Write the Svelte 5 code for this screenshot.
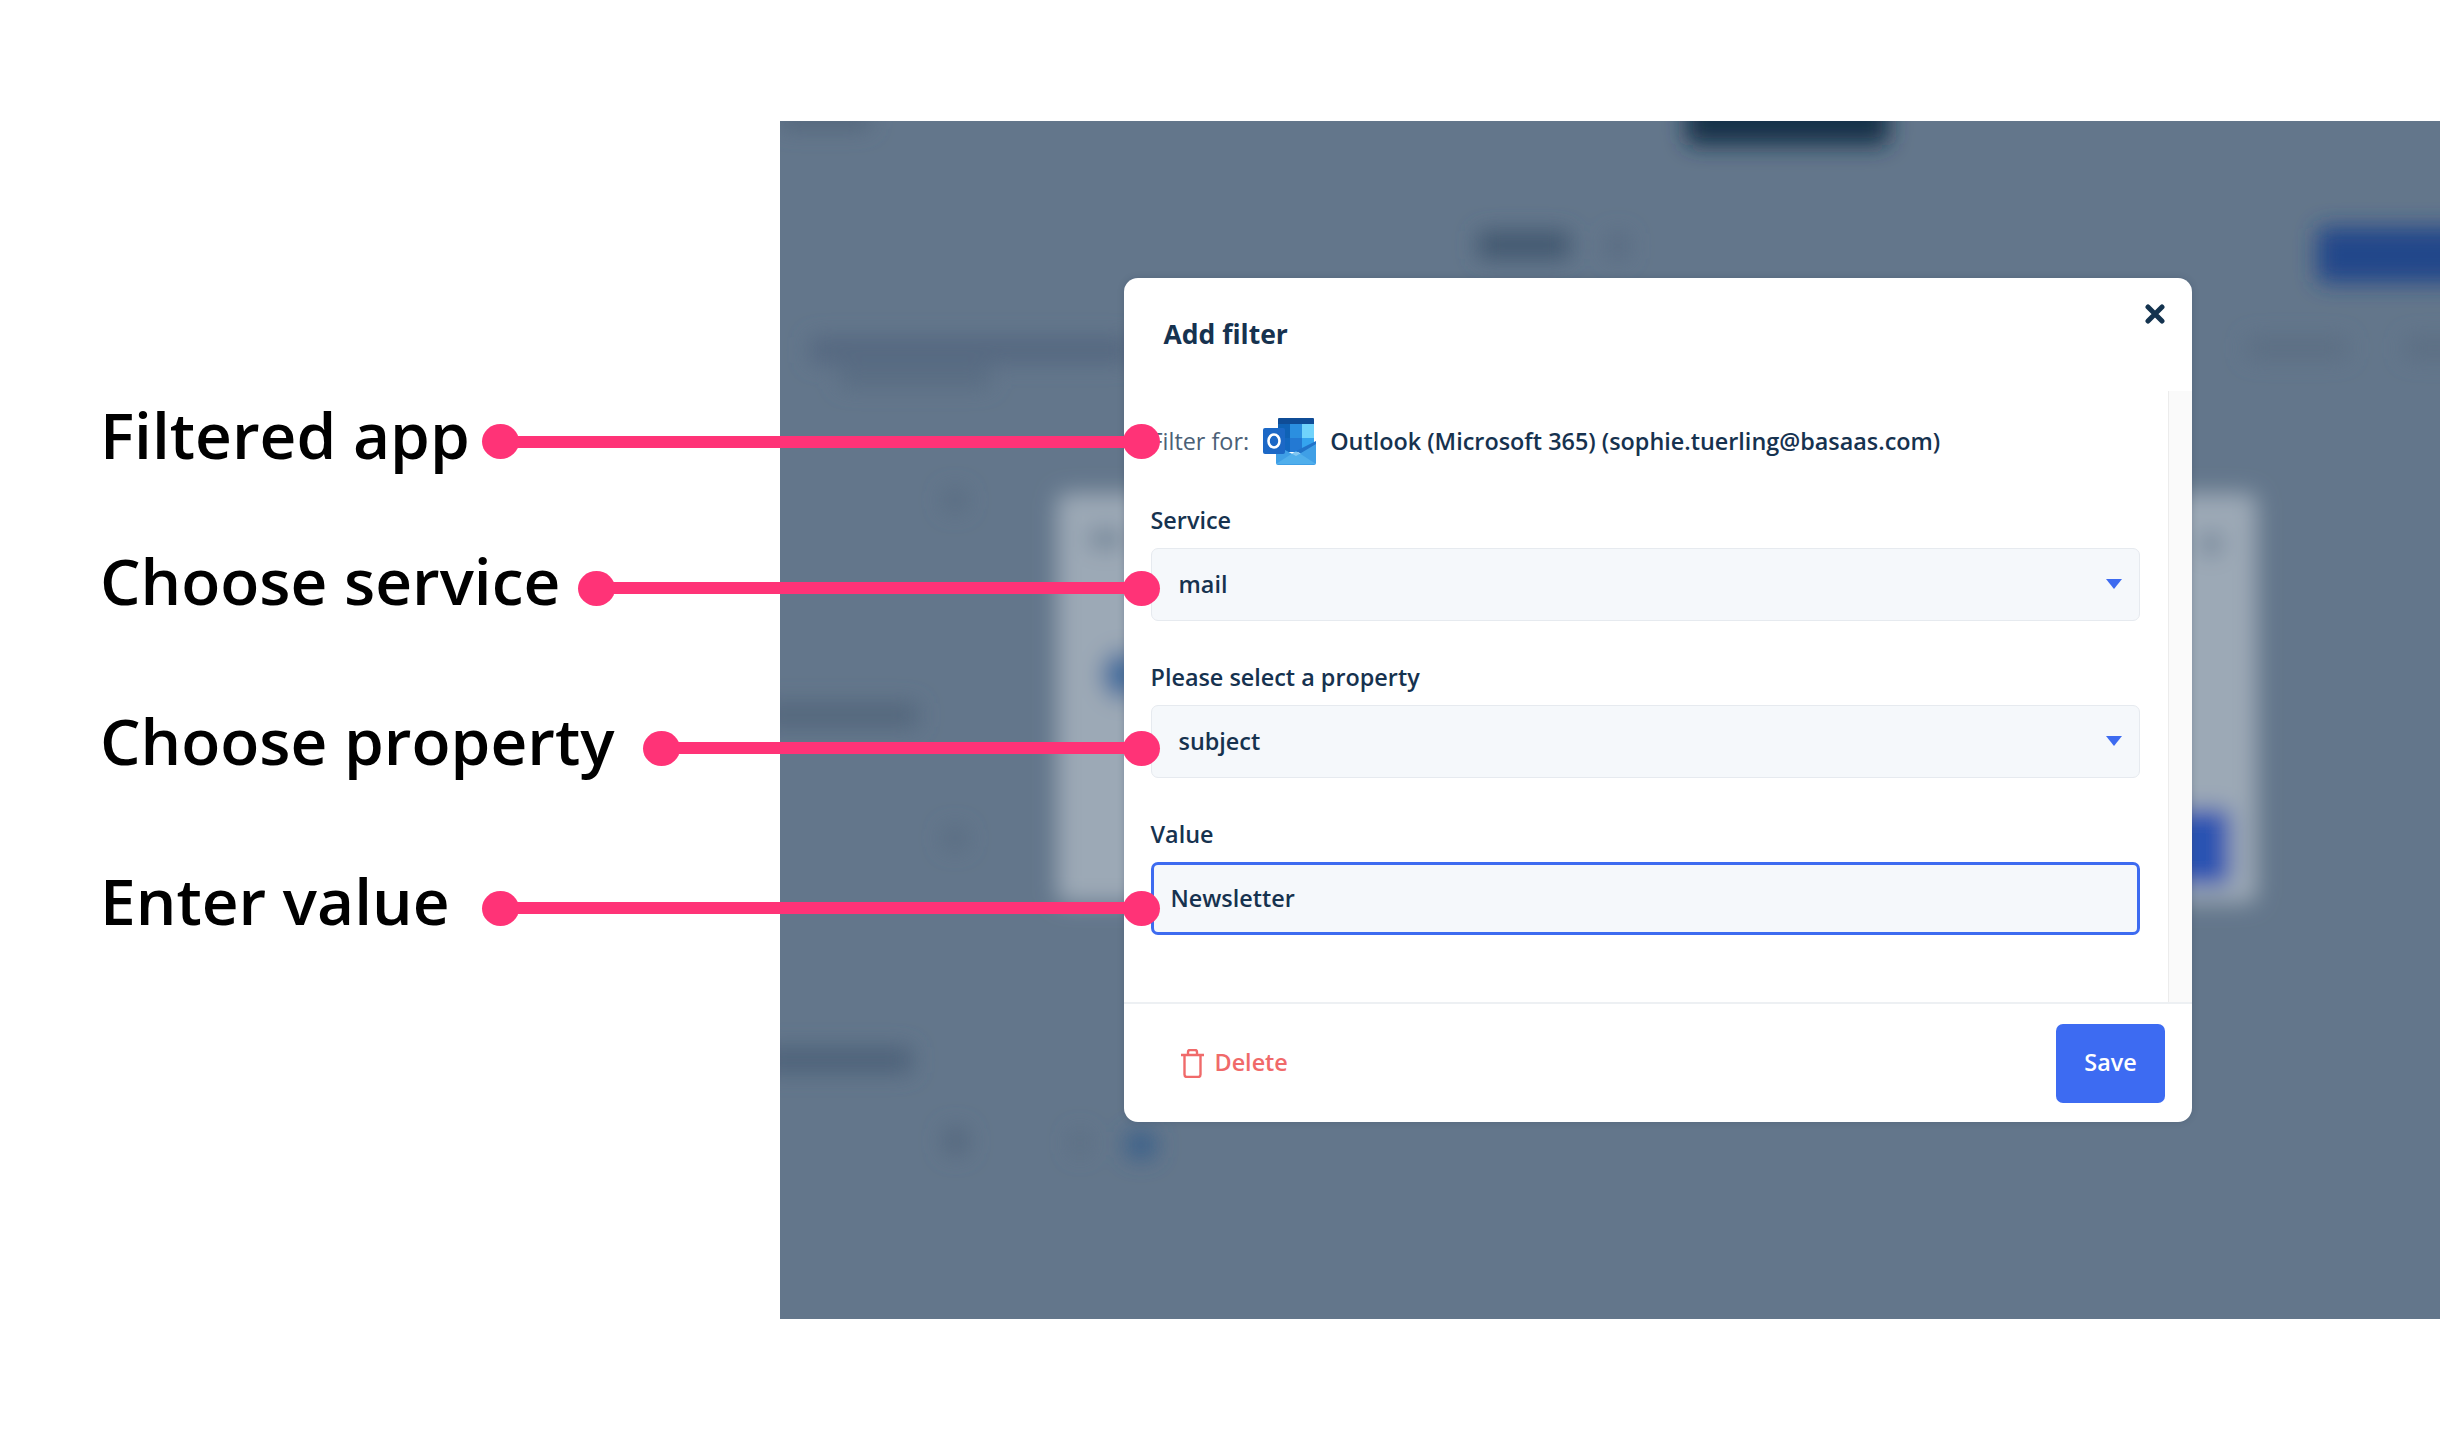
<script>
	const callouts = [
		{ label: 'Filtered app', width: 382 },
		{ label: 'Choose service', width: 478 },
		{ label: 'Choose property', width: 543 },
		{ label: 'Enter value', width: 382 }
	];

	const fields = [
		{ label: 'Service', value: 'mail' },
		{ label: 'Please select a property', value: 'subject' }
	];

	// what is left of the app page behind the dialog, in panel coordinates
	const blobs = [
		{ x: 906, y: -30, w: 203, h: 54, r: 8, fill: '#123049' },
		{ x: 1537, y: 106, w: 200, h: 56, r: 8, fill: '#24478a' },
		{ x: 698, y: 110, w: 92, h: 28, r: 4, fill: '#43586f' },
		{ x: 828, y: 112, w: 20, h: 26, r: 4, fill: '#586b81' },
		{ x: 0, y: -14, w: 90, h: 22, r: 4, fill: '#52667b' },
		{ x: 30, y: 216, w: 320, h: 26, r: 4, fill: '#546880' },
		{ x: 60, y: 246, w: 150, h: 20, r: 4, fill: '#586c82' },
		{ x: 1467, y: 216, w: 100, h: 22, r: 4, fill: '#5b6e83' },
		{ x: 1625, y: 216, w: 60, h: 22, r: 4, fill: '#5b6e83' },
		{ x: 277, y: 372, w: 1200, h: 410, r: 10, fill: '#9ca9b6' },
		{ x: 309, y: 408, w: 34, h: 20, r: 4, fill: '#76879a' },
		{ x: 1420, y: 412, w: 22, h: 22, r: 6, fill: '#76879a' },
		{ x: 322, y: 530, w: 42, h: 48, r: 22, fill: '#456e9e' },
		{ x: 1300, y: 688, w: 150, h: 76, r: 8, fill: '#2b53b2' },
		{ x: -20, y: 582, w: 158, h: 24, r: 4, fill: '#52667c' },
		{ x: -20, y: 926, w: 152, h: 26, r: 4, fill: '#4e6279' },
		{ x: 164, y: 368, w: 22, h: 22, r: 6, fill: '#596c81' },
		{ x: 164, y: 706, w: 22, h: 22, r: 6, fill: '#596c81' },
		{ x: 164, y: 1006, w: 24, h: 28, r: 8, fill: '#54687e' },
		{ x: 292, y: 1010, w: 16, h: 24, r: 6, fill: '#5a6d82' },
		{ x: 346, y: 1010, w: 30, h: 28, r: 8, fill: '#3a618a' }
	];
</script>

<div class="page">
	<section class="panel">
		<svg class="backdrop" width="1660" height="1198" viewBox="0 0 1660 1198" aria-hidden="true">
			<defs>
				<filter id="soft" x="-200" y="-200" width="2060" height="1600" filterUnits="userSpaceOnUse">
					<feGaussianBlur stdDeviation="11" />
				</filter>
			</defs>
			<g filter="url(#soft)">
				{#each blobs as b}
					<rect x={b.x} y={b.y} width={b.w} height={b.h} rx={b.r} fill={b.fill} />
				{/each}
			</g>
		</svg>

		<div class="modal">
			<header class="modal-head">
				<h2>Add filter</h2>
				<button class="close" aria-label="Close">
					<svg width="20" height="20" viewBox="0 0 20 20">
						<path d="M3 3 17 17M17 3 3 17" fill="none" stroke="#14334f" stroke-width="5" stroke-linecap="round" />
					</svg>
				</button>
			</header>

			<div class="modal-body">
				<div class="content">
					<div class="filter-for">
						<span class="muted">Filter for:</span>
						<svg class="outlook" width="54" height="47" viewBox="0 0 54 47" aria-hidden="true">
							<rect x="15" y="0" width="36" height="7" rx="1" fill="#0f4c96" />
							<rect x="15" y="6" width="12" height="14" fill="#0f62b6" />
							<rect x="27" y="6" width="12" height="14" fill="#2b8fe0" />
							<rect x="39" y="6" width="12" height="14" fill="#70d3fb" />
							<rect x="15" y="20" width="12" height="14" fill="#1267c0" />
							<rect x="27" y="20" width="12" height="14" fill="#2379d3" />
							<rect x="39" y="20" width="12" height="14" fill="#35a4ee" />
							<path d="M53 23V44L33 33Z" fill="#2173c9" />
							<path d="M13 27 33 38 53 26V45a2 2 0 0 1-2 2H15a2 2 0 0 1-2-2Z" fill="#3f9fe6" />
							<path d="M13 46 33 33 53 46Z" fill="#57b4ee" opacity=".75" />
							<rect x="0" y="10" width="22" height="26" rx="2" fill="#1c68c6" />
							<ellipse cx="11" cy="23" rx="5.5" ry="6.5" fill="none" stroke="#fff" stroke-width="2.6" />
						</svg>
						<span class="app-name">Outlook (Microsoft 365) (sophie.tuerling@basaas.com)</span>
					</div>

					{#each fields as field}
						<div class="group">
							<div class="label">{field.label}</div>
							<div class="select">
								<span>{field.value}</span>
								<svg width="16" height="10" viewBox="0 0 16 10" aria-hidden="true">
									<path d="M0 0H16L8 10Z" fill="#3d6bf0" />
								</svg>
							</div>
						</div>
					{/each}

					<div class="group">
						<label class="label" for="value">Value</label>
						<input id="value" class="input" type="text" value="Newsletter" />
					</div>
				</div>
				<div class="track"></div>
			</div>

			<footer class="modal-foot">
				<button class="delete">
					<svg width="25" height="29" viewBox="0 0 25 29" aria-hidden="true">
						<path d="M1 6H24M4.500 6V25.500A2.500 2.500 0 0 0 7 28H18A2.500 2.500 0 0 0 20.500 25.500V6M8 6V3A2 2 0 0 1 10 1H15A2 2 0 0 1 17 3V6" fill="none" stroke="#f06a6a" stroke-width="2.400" stroke-linejoin="round" />
					</svg>
					Delete
				</button>
				<button class="save">Save</button>
			</footer>
		</div>
	</section>

	<div class="callouts">
		{#each callouts as item}
			<div class="callout">
				<span class="callout-label" style:width="{item.width}px">{item.label}</span>
				<div class="connector">
					<i class="dot"></i>
					<i class="line"></i>
					<i class="dot"></i>
				</div>
			</div>
		{/each}
	</div>
</div>

<style>
	:global(body) {
		margin: 0;
		background: #fff;
	}
	.page {
		position: relative;
		width: 2440px;
		height: 1440px;
		overflow: hidden;
		padding: 121px 0 0 780px;
		box-sizing: border-box;
		font-family: 'Open Sans', 'Noto Sans', sans-serif;
		color: #16324f;
	}
	.panel {
		display: grid;
		align-items: start;
		justify-items: start;
		width: 1660px;
		height: 1198px;
		overflow: hidden;
		background: #63768b;
	}
	.backdrop,
	.modal {
		grid-area: 1 / 1;
	}
	.backdrop {
		display: block;
	}
	.modal {
		position: relative;
		display: flex;
		flex-direction: column;
		width: 1068px;
		height: 844px;
		margin: 157px 0 0 343.5px;
		background: #fff;
		border-radius: 14px;
		overflow: hidden;
		box-shadow: 0 0 6px rgba(40, 60, 85, 0.25);
	}
	.modal-head {
		display: flex;
		justify-content: space-between;
		height: 113px;
		flex: none;
		box-sizing: border-box;
		padding: 26px 26px 0 40px;
	}
	h2 {
		margin: 12px 0 0;
		font-size: 26.5px;
		line-height: 36px;
		font-weight: 700;
		color: #16324f;
	}
	.close {
		width: 21px;
		height: 21px;
		margin-top: 0;
		padding: 0;
		border: 0;
		background: none;
	}
	.modal-body {
		display: flex;
		flex: 1;
		min-height: 0;
	}
	.content {
		flex: 1;
		padding: 27px 28px 0 27px;
	}
	.track {
		width: 24px;
		box-sizing: border-box;
		background: #fafafa;
		border-left: 1.5px solid #ececec;
	}
	.filter-for {
		display: flex;
		align-items: center;
		height: 47px;
		margin-bottom: 41px;
		font-size: 23.4px;
	}
	.muted {
		color: #4b6076;
		font-weight: 500;
		padding-bottom: 2px;
	}
	.outlook {
		margin: 0 13px 0 14px;
		flex: none;
	}
	.app-name {
		font-weight: 600;
		padding-bottom: 2px;
	}
	.group {
		margin-bottom: 41px;
	}
	.filter-for + .group {
		margin-top: -1px;
	}
	.label {
		display: block;
		margin-bottom: 13px;
		font-size: 23.4px;
		line-height: 30px;
		font-weight: 600;
		color: #16324f;
	}
	.select {
		display: flex;
		align-items: center;
		justify-content: space-between;
		box-sizing: border-box;
		height: 73px;
		padding: 0 17px 1px 27px;
		background: #f5f8fb;
		border: 1.5px solid #e6eaef;
		border-radius: 7px;
		font-size: 23.4px;
		font-weight: 600;
	}
	.input {
		display: block;
		box-sizing: border-box;
		width: 100%;
		height: 73px;
		padding: 0 17px 2px;
		background: #f5f8fb;
		border: 3px solid #3d6bf0;
		border-radius: 7px;
		outline: none;
		font-family: inherit;
		font-size: 23.4px;
		font-weight: 600;
		color: #16324f;
	}
	.modal-foot {
		display: flex;
		align-items: center;
		justify-content: space-between;
		flex: none;
		height: 120px;
		box-sizing: border-box;
		padding: 0 26.5px 0 56px;
		border-top: 2px solid #edf0f3;
	}
	.delete {
		display: flex;
		align-items: center;
		gap: 10px;
		padding: 0 0 2px;
		border: 0;
		background: none;
		font-family: inherit;
		font-size: 23.4px;
		font-weight: 600;
		color: #f06a6a;
	}
	.delete svg {
		margin-top: 2px;
	}
	.save {
		width: 109px;
		height: 79px;
		padding: 0 0 2px;
		border: 0;
		border-radius: 7px;
		background: #3d6bf2;
		font-family: inherit;
		font-size: 23.4px;
		font-weight: 600;
		color: #fff;
	}
	.callouts {
		position: absolute;
		left: 100px;
		top: 391.5px;
		display: grid;
		grid-template-rows: 146.500px 160px 160px 100px;
		width: 1060px;
	}
	.callout {
		display: flex;
		align-items: center;
		height: 100px;
	}
	.callout-label {
		flex: none;
		padding-bottom: 14px;
		font-size: 64px;
		line-height: 84px;
		font-weight: 600;
		color: #000;
		white-space: nowrap;
	}
	.connector {
		display: flex;
		align-items: center;
		flex: 1;
	}
	.dot {
		flex: none;
		width: 37px;
		height: 35px;
		border-radius: 50%;
		background: #ff3377;
	}
	.line {
		flex: 1;
		height: 12px;
		margin: 0 -2px;
		background: #ff3377;
	}
</style>
